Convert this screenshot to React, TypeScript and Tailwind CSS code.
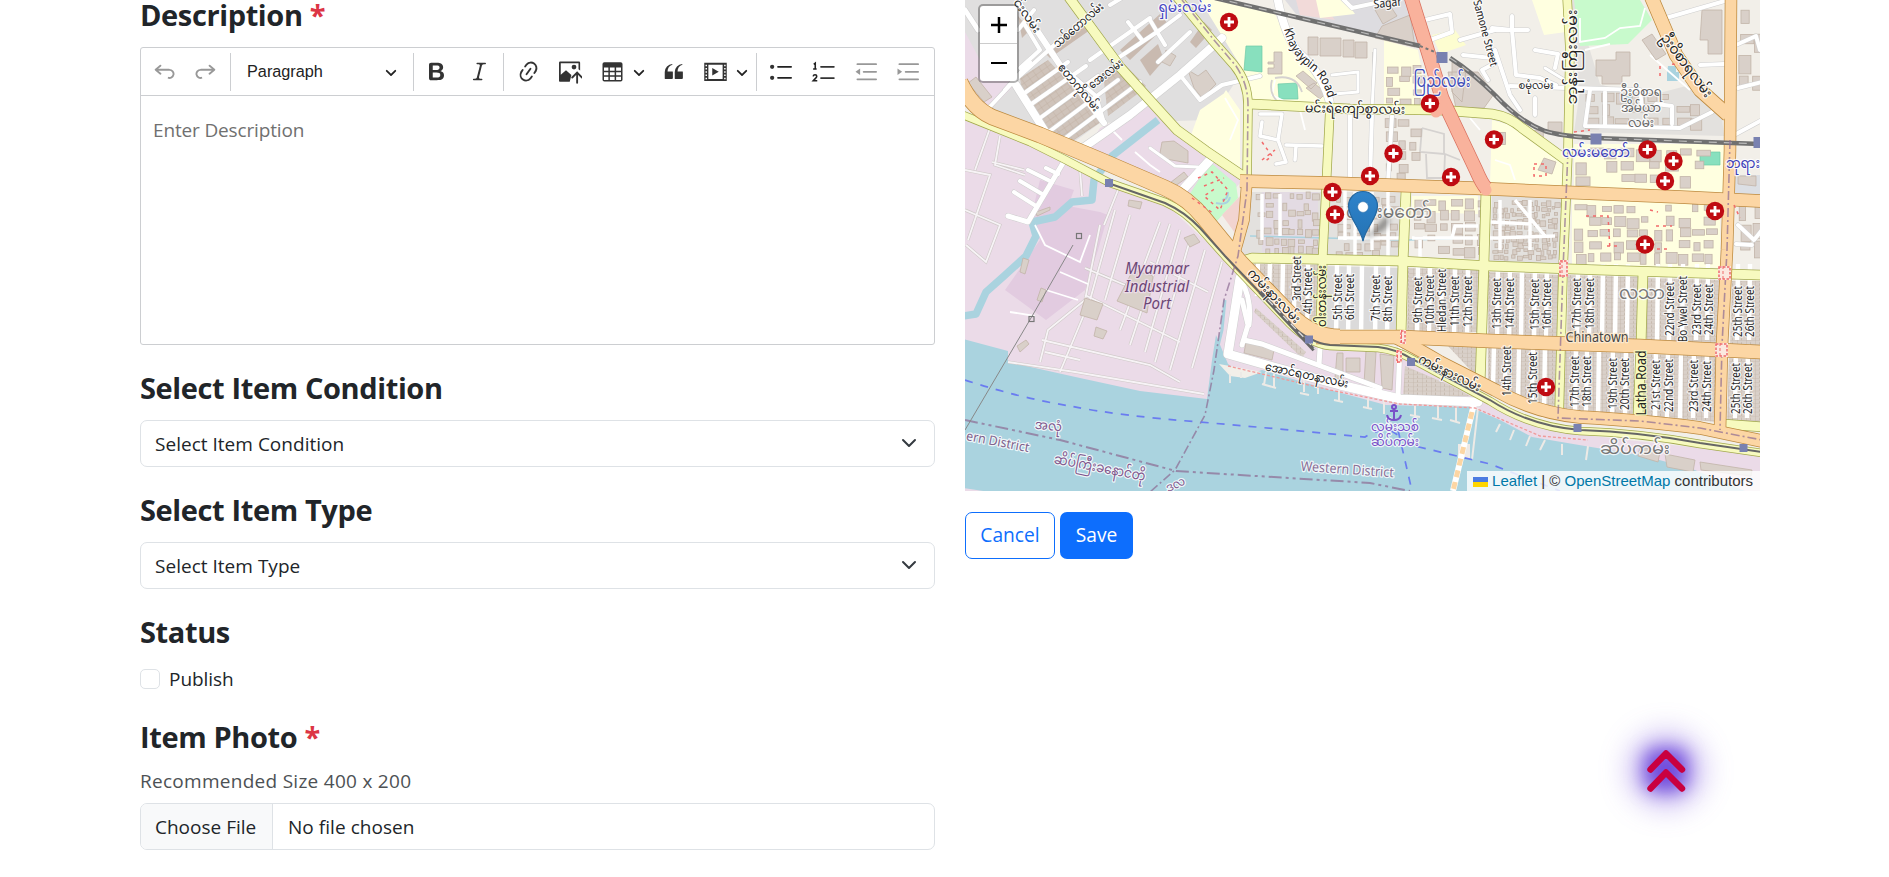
import type { ReactNode } from "react";

const UI = "font-['Open_Sans','Noto_Sans',sans-serif]";

/* ---------- small form pieces ---------- */

function Heading({ children, required }: { children: ReactNode; required?: boolean }) {
  return (
    <h3 className="h-[36px] whitespace-nowrap text-[29px] font-bold leading-[36px] tracking-[-0.38px] text-[#212529]">
      {children}
      {required && <span className="text-[#dc3545]"> *</span>}
    </h3>
  );
}

function SelectBox({ label }: { label: string }) {
  return (
    <button className="flex h-[47px] w-full items-center justify-between rounded-[7px] border border-[#dee2e6] bg-white pl-[14px] pr-[17px] text-left">
      <span className="pt-[2px] text-[19px] tracking-[0.02px] text-[#212529]">{label}</span>
      <svg width="16" height="16" viewBox="0 0 16 16" fill="none" stroke="#343a40" strokeWidth="2" strokeLinecap="round" strokeLinejoin="round" className="-mt-[2px]">
        <path d="m2 5 6 6 6-6" />
      </svg>
    </button>
  );
}

/* ---------- editor toolbar ---------- */

function Tool({ children, dim, className = "" }: { children: ReactNode; dim?: boolean; className?: string }) {
  return (
    <button className={`flex h-[40px] w-[41px] shrink-0 items-center justify-center ${className}`}>
      <svg width="25" height="25" viewBox="0 0 20 20" fill="#333" className={dim ? "opacity-50" : ""}>
        {children}
      </svg>
    </button>
  );
}

function Caret({ className = "" }: { className?: string }) {
  return (
    <svg width="12" height="12" viewBox="0 0 10 10" className={`shrink-0 ${className}`}>
      <path d="M.941 4.523a.75.75 0 1 1 1.06-1.06l3.006 3.005 3.005-3.005a.75.75 0 1 1 1.06 1.06l-3.549 3.55a.75.75 0 0 1-1.168-.136L.941 4.523z" fill="#222" />
    </svg>
  );
}

function Divider({ className = "" }: { className?: string }) {
  return <span className={`h-[38px] w-px shrink-0 bg-[#ccced1] ${className}`} />;
}

function Toolbar() {
  return (
    <div className="flex h-[48px] items-center border-b border-[#ccced1] pl-[3px]">
      <Tool dim>
        <path d="m5.042 9.367 2.189 1.837a.75.75 0 0 1-.965 1.149l-3.788-3.18a.747.747 0 0 1-.21-.284.75.75 0 0 1 .17-.945L6.23 4.762a.75.75 0 1 1 .964 1.15L4.863 7.866h8.917A.75.75 0 0 1 14 7.9a4 4 0 1 1-1.477 7.718l.344-1.489a2.5 2.5 0 1 0 1.094-4.73l.008-.032H5.042z" />
      </Tool>
      <Tool dim>
        <path d="m14.958 9.367-2.189 1.837a.75.75 0 0 0 .965 1.149l3.788-3.18a.747.747 0 0 0 .21-.284.75.75 0 0 0-.17-.945L13.77 4.762a.75.75 0 1 0-.964 1.15l2.331 1.955H6.22A.75.75 0 0 0 6 7.9a4 4 0 1 0 1.477 7.718l-.344-1.489A2.5 2.5 0 1 1 6.039 9.4l-.008-.032h8.927z" />
      </Tool>
      <Divider className="ml-[4px]" />
      <button className="flex h-[40px] w-[182px] shrink-0 items-center justify-between pl-[16px] pr-[16px]">
        <span className="-mt-[1px] font-['Liberation_Sans',Arial,sans-serif] text-[16.25px] text-[#222]">Paragraph</span>
        <Caret />
      </button>
      <Divider />
      <Tool className="ml-[2px]">
        <path d="M10.187 17H5.773c-.637 0-1.092-.138-1.364-.415-.273-.277-.409-.718-.409-1.323V4.738c0-.617.14-1.062.419-1.332.279-.27.73-.406 1.354-.406h4.68c.69 0 1.288.041 1.793.124.506.083.96.242 1.36.478.341.197.644.447.906.75a3.262 3.262 0 0 1 .808 2.162c0 1.401-.722 2.426-2.167 3.075C15.05 10.175 16 11.315 16 13.01a3.756 3.756 0 0 1-2.296 3.504 6.1 6.1 0 0 1-1.517.377c-.571.073-1.238.11-2 .11zm-.217-6.217H7v4.087h3.069c1.977 0 2.965-.69 2.965-2.072 0-.707-.256-1.22-.768-1.537-.512-.319-1.277-.478-2.296-.478zM7 5.13v3.619h2.606c.729 0 1.292-.067 1.69-.2a1.6 1.6 0 0 0 .91-.765c.165-.267.247-.566.247-.897 0-.707-.26-1.176-.778-1.409-.519-.232-1.31-.348-2.375-.348H7z" />
      </Tool>
      <Tool className="ml-[2px]">
        <path d="m9.586 14.633.021.004c-.036.335.095.655.393.962.082.083.173.15.274.201h1.474a.6.6 0 1 1 0 1.2H5.304a.6.6 0 0 1 0-1.2h1.15c.474-.07.809-.182 1.005-.334.157-.122.291-.32.404-.597l2.416-9.55a1.053 1.053 0 0 0-.281-.823 1.12 1.12 0 0 0-.442-.296H8.15a.6.6 0 0 1 0-1.2h6.443a.6.6 0 1 1 0 1.2h-1.195c-.376.056-.65.155-.823.296-.215.175-.423.439-.623.79l-2.366 9.347z" />
      </Tool>
      <Divider className="ml-[3px]" />
      <Tool className="ml-[4px]">
        <path d="m11.077 15 .991-1.416a.75.75 0 1 1 1.229.86l-1.148 1.64a.748.748 0 0 1-.217.206 5.251 5.251 0 0 1-8.503-5.955.741.741 0 0 1 .12-.274l1.147-1.639a.75.75 0 1 1 1.228.86L4.933 10.7l.006.003a3.75 3.75 0 0 0 6.132 4.294l.006.004zm5.494-5.335a.748.748 0 0 1-.12.274l-1.147 1.639a.75.75 0 1 1-1.228-.86l.86-1.23a3.75 3.75 0 0 0-6.144-4.301l-.86 1.229a.75.75 0 0 1-1.229-.86l1.148-1.64a.748.748 0 0 1 .217-.206 5.251 5.251 0 0 1 8.503 5.955zm-4.563-2.532a.75.75 0 0 1 .184 1.045l-3.155 4.505a.75.75 0 1 1-1.229-.86l3.155-4.506a.75.75 0 0 1 1.045-.184z" />
      </Tool>
      <Tool>
        <path d="M1.6 17.6V2.9q0-.9.9-.9h15.1q.9 0 .9.9v6.3l-1.3-1V3.4H3v9.200l4.200-3.700 4.300 3.800-1.300 5.500H2.300q-.7 0-.7-.6z" />
        <circle cx="13.6" cy="6.4" r="1.9" />
        <path d="m12.2 14.8 3.9-3.9 3.9 3.9M16.1 11.5V19" fill="none" stroke="#333" strokeWidth="1.5" strokeLinecap="round" />
      </Tool>
      <Tool className="ml-[2px]">
        <path fillRule="evenodd" d="M3.5 2.6h13Q18 2.6 18 4v12.6q0 1.4-1.5 1.4h-13Q2 18 2 16.600V4q0-1.400 1.500-1.400zM3.200 6.800v2.500h3.500v-2.500zm4.700 0v2.500h3.800v-2.500zm5 0v2.500h3.900v-2.500zM3.200 10.500v2.500h3.500v-2.500zm4.700 0v2.500h3.800v-2.500zm5 0v2.500h3.900v-2.500zM3.200 14.200v2.600h3.500v-2.600zm4.700 0v2.600h3.800v-2.600zm5 0v2.600h3.900v-2.600z" />
      </Tool>
      <Caret />
      <Tool className="ml-[8px]">
        <path d="M3 10.423a6.5 6.5 0 0 1 6.056-6.408l.038.67C6.448 5.423 5.354 7.663 5.22 10H9c.552 0 .5.432.5.986v4.511c0 .554-.448.503-1 .503h-5c-.552 0-.5-.449-.5-1.003v-4.574zm8 0a6.5 6.5 0 0 1 6.056-6.408l.038.67c-2.646.739-3.74 2.979-3.873 5.315H17c.552 0 .5.432.5.986v4.511c0 .554-.448.503-1 .503h-5c-.552 0-.5-.449-.5-1.003v-4.574z" />
      </Tool>
      <Tool className="ml-[1px]">
        <path fillRule="evenodd" d="M1 3h18v14.500H1zM4.300 4.600v11.300h11.400V4.600zM2 4.500v1.200h1.200V4.500zm0 2.600v1.200h1.200V7.100zm0 2.600v1.200h1.200V9.700zm0 2.600v1.200h1.200v-1.200zm0 2.600v1.200h1.200v-1.200zM16.900 4.500v1.200h1.200V4.500zm0 2.600v1.200h1.200V7.100zm0 2.600v1.200h1.200V9.700zm0 2.600v1.200h1.200v-1.200zm0 2.600v1.200h1.200v-1.200z" />
        <path d="M7.400 7.200v6l5.200-3z" />
      </Tool>
      <Caret />
      <Divider className="ml-[8px]" />
      <Tool className="ml-[3px]">
        <path d="M8 6.200h10.500M8 15h10.500" stroke="#222" strokeWidth="1.400" strokeLinecap="round" />
        <circle cx="3.300" cy="6.200" r="1.700" />
        <circle cx="3.300" cy="15" r="1.700" />
      </Tool>
      <Tool className="ml-[2px]">
        <path d="M8 6.200h10.300M8 15.200h10.300" stroke="#333" strokeWidth="1.400" strokeLinecap="round" />
        <path d="M2.200 4.300 3.400 3.300V8M1.700 8H4.500M1.700 13.900q.3-1.300 1.500-1.300 1.400 0 1.400 1.200 0 .8-1.200 1.900L1.800 17.400H5" fill="none" stroke="#222" strokeWidth="1.250" />
      </Tool>
      <Tool dim className="ml-[1px]">
        <path d="M3.500 4.200h15M8.500 10.200h10M3.500 16.200h15" stroke="#333" strokeWidth="1.400" strokeLinecap="round" />
        <path d="M5.700 7.600v5.200L2 10.200z" />
      </Tool>
      <Tool dim className="ml-[1px]">
        <path d="M3.500 4.200h15M8.500 10.200h10M3.500 16.200h15" stroke="#333" strokeWidth="1.400" strokeLinecap="round" />
        <path d="M2 7.600v5.200l3.700-2.600z" />
      </Tool>
    </div>
  );
}

/* ---------- map ---------- */

const TRUNK = "#f9b29c";
const PRIMARY = "#fcd6a4";
const SECONDARY = "#f7fabf";

type RoadSpec = { d: string; w: number; c: string };

const yellowRoads: RoadSpec[] = [
  { d: "M1068-4 1120 67 1147 97 1177 130 1206 151 1243 176", w: 9, c: SECONDARY },
  { d: "M1176-4 1212 40 1234 65Q1248 82 1248 105L1247 180", w: 8, c: SECONDARY },
  { d: "M1250 104 1350 109 1440 110 1492 114Q1510 117 1522 128L1566 160", w: 9, c: SECONDARY },
  { d: "M1236 263 1252 258 1400 261 1490 266 1600 270 1762 275", w: 9, c: SECONDARY },
  { d: "M1330 108 1326 190 1323 250 1320 335", w: 8, c: SECONDARY },
  { d: "M1406 190 1403 262 1401 335", w: 9, c: SECONDARY },
  { d: "M1486 190 1484 262 1480 385", w: 9, c: SECONDARY },
  { d: "M1567-4 1570 50 1568 150 1566 200 1563 270 1559 418", w: 8, c: SECONDARY },
  { d: "M1643 272 1641 345 1638 418", w: 9, c: SECONDARY },
  { d: "M1722 424 1762 427", w: 9, c: SECONDARY },
  { d: "M963 115 1030 142 1062 158 1110 183 1165 202Q1185 211 1200 228L1225 256 1290 324Q1310 344 1330 346L1378 348Q1396 350 1412 359L1490 401Q1530 427 1580 431 1640 433 1700 444L1762 453", w: 7, c: SECONDARY },
];

const orangeRoads: RoadSpec[] = [
  { d: "M1240 181 1330 183 1470 188 1560 192 1680 197 1762 201", w: 12, c: PRIMARY },
  { d: "M1247 181 1244 220 1234 256", w: 10, c: PRIMARY },
  { d: "M1650-6 1676 55 1700 90 1728 115", w: 13, c: PRIMARY },
  { d: "M1731-4 1730 150 1727 250 1722 345 1720 430", w: 11, c: PRIMARY },
  { d: "M1395 337Q1420 350 1440 362L1495 390Q1535 413 1580 417 1650 421 1700 428L1762 441", w: 12, c: PRIMARY },
  { d: "M1316 337 1400 337 1490 341 1640 346 1762 352", w: 13, c: PRIMARY },
  { d: "M960 82Q972 108 992 117L1040 135 1100 160 1165 188Q1188 198 1204 218L1240 262 1290 314Q1312 337 1340 337", w: 15, c: PRIMARY },
];

const minorRoads: [string, number][] = [
  ["M965 10 978 30", 5], ["M985 112 1015 80 1060 40 1098 8", 4], ["M1016 85 1058 152", 8], ["M1030 62 1005 90", 4],
  ["M1020 5 1060 65 1104 123", 6], ["M1080 150 1130 115 1180 75 1222 38", 8], ["M1026 92 1068 62", 4], ["M1030 105 1086 66", 4],
  ["M1040 118 1098 76", 4], ["M1050 131 1118 80", 4], ["M1060 142 1140 82", 4], ["M1060 65 1096 96 1104 123", 4],
  ["M1090 60 1150 18M1115 60 1160 30 1180 15", 4], ["M1128 22 1142 40M1150 20 1165 45M1158 62 1190 32M1110 5 1125-4", 4],
  ["M1025 25 1040 50 1020 68M1034 10 1018 30", 4], ["M1180 75 1200 100 1222 85 1260 76", 4],
  ["M1277-4Q1284 34 1298 52 1325 75 1331 108", 8], ["M1178 195 1210 160", 9],
  ["M1063 163 1028 222 1008 216", 5], ["M1028 170 1052 182M1020 181 1042 194M1014 192 1036 206M1046 168 1058 174", 4],
  ["M1150 148 1175 166 1198 167", 3], ["M1340-4 1352 8 1380 2", 4],
  ["M1350 111 1350 182M1372 113 1370 182M1392 116 1388 182", 4], ["M1332 75 1358 72 1358 92 1334 94M1375 50 1372 110", 3],
  ["M1260 114 1282 114 1278 140 1260 136 1262 122M1278 140 1286 162 1276 164M1286 145 1322 146M1296 146 1295 160", 3.5],
  ["M1425 20 1450 14 1452 32 1430 40M1460 40 1495 30M1463 55 1492 58M1488 80 1482 70 1497 62", 4],
  ["M1492 28 1512 30 1516 75 1540 78 1556 85M1512 30 1512 16M1492 30 1528 30M1535 50 1558 54 1555 68", 4],
  ["M1495 50 1510 95 1520 110M1510 86 1566 88M1535 98 1535 115", 4], ["M1575 88 1640 90 1642 108M1590 90 1585 126 1680 128 1712 112M1605 92 1605 124M1656 104 1672 106 1672 124", 4],
  ["M1666 18 1728 0M1700 65 1724 64M1736 45 1756 36 1760 50M1738 88 1762 82M1736 134 1762 120", 4],
  ["M1545 68 1568 82M1568 150 1570 118", 3],
  ["M1240 278 1228 354 1270 366 1340 385 1400 399 1478 402", 9], ["M1242 300 1248 325 1242 345M1244 340 1262 344 1310 362 1380 388", 5],
  ["M1320 348 1319 365M1400 345 1398 396M1242 282Q1252 300 1249 325", 5],
  ["M1738 225 1754 240 1762 230M1736 244 1752 245", 4],
];

const portLanes =
  "M1100 225 1085 300 1048 330 1040 362M1115 210 1090 300 1060 372M1008 362 1075 372 1204 394M1042 340 1150 365 1180 382M1130 215 1105 300M1160 222 1120 330M1170 224 1130 345M1180 230 1145 352M1190 240 1155 362M1205 250 1170 370M1222 262 1200 340 1192 368M1085 295 1180 342M1045 352 1080 360M1085 268 1125 285M1150 262 1208 292M965 210 1000 225 986 262 966 245M990 128 975 170M1000 136 995 165 1025 175M965 170 990 175 968 240M1080 170 1082 196M1118 190 1104 225M1024 170 992 162";

const upperStreets = [1258, 1270, 1283, 1295, 1308, 1337, 1349, 1362, 1376, 1388, 1418, 1430, 1442, 1455, 1468, 1498, 1510, 1522, 1535, 1547, 1578, 1590, 1603, 1616, 1628, 1658, 1670, 1683, 1697, 1708, 1738, 1750];
const lowerStreets = [1494, 1506, 1519, 1533, 1545, 1576, 1587, 1599, 1613, 1626, 1656, 1668, 1681, 1694, 1707, 1736, 1748];

function seeded(seed: number) {
  let s = seed;
  return () => {
    s = (s * 16807) % 2147483647;
    return s / 2147483647;
  };
}

type Rect = { x: number; y: number; w: number; h: number };

function scatter(x0: number, y0: number, x1: number, y1: number, stepX: number, stepY: number, fill: number, seed: number): Rect[] {
  const rnd = seeded(seed);
  const out: Rect[] = [];
  for (let y = y0; y < y1; y += stepY) {
    for (let x = x0; x < x1; x += stepX) {
      if (rnd() < fill) {
        const w = stepX * (0.4 + rnd() * 0.55);
        const h = stepY * (0.4 + rnd() * 0.55);
        out.push({ x: x + rnd() * 3, y: y + rnd() * 3, w, h });
      }
    }
  }
  return out;
}

const buildings: Rect[] = [
  ...scatter(1256, 192, 1316, 252, 8, 9, 0.75, 11),
  ...scatter(1335, 196, 1398, 252, 9, 9, 0.8, 23),
  ...scatter(1412, 198, 1478, 252, 13, 12, 0.75, 37),
  ...scatter(1492, 200, 1558, 256, 6, 6, 0.92, 41),
  ...scatter(1574, 204, 1712, 260, 13, 12, 0.85, 53),
  ...scatter(1574, 148, 1700, 182, 15, 13, 0.75, 61),
  ...scatter(1492, 130, 1550, 178, 20, 16, 0.45, 71),
  ...scatter(1385, 118, 1412, 178, 12, 11, 0.7, 83),
  ...scatter(1386, 65, 1420, 100, 13, 11, 0.75, 97),
  ...scatter(1585, 92, 1700, 126, 15, 12, 0.75, 101),
  ...scatter(1739, 205, 1758, 255, 14, 18, 0.7, 107),
  ...scatter(1738, 10, 1758, 80, 14, 22, 0.7, 109),
];

const solidBuildings =
  "M1308 37h10v18h-10zM1320 38h21v18h-21zM1343 40h11v17h-11zM1355 42h12v16h-12zM1268 62h6v-10h8v22h-14v-6h6v-4h-6zM1296 76l7-5 14 12-6 6zM1306 88l8-5 12 10-6 6z" +
  "M1375 10l14-6 8 12-14 8zM1382 26l28-11 5 32-40-9zM1452 62l14 8-4 32-10-10zM1448 72h30l16 22-10 14h-28zM1596 60h20v-8h14v24h-8v8h-20v-8h-6zM1642 40l10-6 14 20-10 6zM1702 10h20v44h-14v-14h-8z" +
  "M1162 142l12-1 14 10v12l-22-4-6-6zM1166 186l18-14 4 5-20 14zM968 83l8-6 16 20-8 5zM1133 270l20 6-6 37-30-12zM1085 298l18 6-6 16-17-5zM1096 327l11 4-4 8-9-3z" +
  "M1023 258l6 2-4 14-5-2zM1041 288l5 2-4 12-5-2zM1017 346l9-6 3 4-9 8zM1036 212l14-5 0 3-13 6zM1129 200l13 2-2 7-12-3zM1184 238l10-4 6 8-10 5z" +
  "M1188 70l10 6 8-6 10 14-14 14-8-10zM1166 50l10 6-6 10-8-4zM1246 342l28 8-2 10-28-7zM1337 353l6 0 0 28-8-3zM1346 358l14 0 0 14-14 0zM1366 350l10 2-2 36-10-4zM1380 354l14 2-2 34-10-2z" +
  "M1548 122h14v10h-14zM1544 158l12 4-4 12-14-4zM1738 176h18v10l-18-2zM1640 446l20 6-2 10-20-6zM1665 454l30 6-2 12-26-5zM1700 462l52 8-1 6-50-6z";

const hospitals: [number, number][] = [
  [1229, 22], [1430, 103.5], [1494, 139.5], [1393.5, 153.5], [1370, 176], [1451, 177], [1332.5, 192], [1335, 214.5],
  [1647.5, 149.5], [1673.5, 161], [1665, 181], [1715, 211], [1645, 244.5], [1546, 387],
];

const stations: [number, number, number][] = [
  [1109, 183, 8], [1442, 57.5, 11], [1596, 139, 11], [1759, 142.5, 11], [1309, 339.5, 8], [1411, 362, 8], [1577.5, 428, 8], [1743.5, 448, 8],
];

type LabelSpec = { t: string; x: number; y: number; r?: number; len?: number; s?: number; c?: string; halo?: string; i?: boolean };

const labels: LabelSpec[] = [
  { t: "ရှမ်းလမ်း", x: 1185, y: 12, len: 53, s: 15, c: "#4444c4" },
  { t: "င်းလမ်း", x: 1024, y: 18, r: 55, len: 38, s: 12 },
  { t: "သစ်တောလမ်း", x: 1081, y: 28, r: -41, len: 62, s: 12 },
  { t: "ဧတာကိုလမ်း", x: 1076, y: 90, r: 50, len: 58, s: 12 },
  { t: "အေးလမ်း", x: 1108, y: 77, r: -38, len: 40, s: 12 },
  { t: "Sagar", x: 1388, y: 7, r: -6, len: 28, s: 12 },
  { t: "Samone Street", x: 1482, y: 34, r: 75, len: 68, s: 11 },
  { t: "ပြည်လမ်း", x: 1442, y: 87, len: 57, s: 18, c: "#3b4ab8" },
  { t: "မင်းရဲကျော်စွာလမ်း", x: 1355, y: 113, r: 1, len: 100, s: 13 },
  { t: "လမ်းမတော်", x: 1389, y: 218, len: 86, s: 18, c: "#777" },
  { t: "စမုံလမ်း", x: 1536, y: 89, len: 35, s: 11 },
  { t: "ဘုန်းကြီးလမ်း", x: 1577, y: 57, r: -90, len: 95, s: 14 },
  { t: "ဦးဝိစာရလမ်း", x: 1683, y: 68, r: 53, len: 76, s: 14 },
  { t: "ဦးဝိစာရ", x: 1641, y: 96, len: 42, s: 12, c: "#666" },
  { t: "အိမ်ယာ", x: 1641, y: 112, len: 40, s: 12, c: "#666" },
  { t: "လမ်း", x: 1641, y: 127, len: 26, s: 12, c: "#666" },
  { t: "လမ်းမတော်", x: 1596, y: 157, len: 68, s: 15, c: "#3b3fb8" },
  { t: "ဘုရား", x: 1743, y: 168, len: 34, s: 14, c: "#3b3fb8" },
  { t: "Myanmar", x: 1157, y: 274, len: 64, s: 15.5, c: "#6c4675", halo: "#ebdbe8", i: true },
  { t: "Industrial", x: 1157, y: 292, len: 64, s: 15.5, c: "#6c4675", halo: "#ebdbe8", i: true },
  { t: "Port", x: 1157, y: 309, len: 28, s: 15.5, c: "#6c4675", halo: "#ebdbe8", i: true },
  { t: "အလုံ", x: 1048, y: 430, r: 5, len: 27, s: 13, c: "#80558c" },
  { t: "ern District", x: 997, y: 446, r: 11, len: 64, s: 13, c: "#80628c" },
  { t: "ဆိပ်ကြီးခနောင်တို", x: 1099, y: 472, r: 11, len: 93, s: 14, c: "#80558c" },
  { t: "ဒလ", x: 1177, y: 488, r: -25, len: 20, s: 12, c: "#80558c" },
  { t: "Western District", x: 1347, y: 474, r: 4, len: 93, s: 13.5, c: "#8a6f96" },
  { t: "ကမ်းနားလမ်း", x: 1271, y: 299, r: 46, len: 70, s: 13 },
  { t: "ကမ်းနားလမ်း", x: 1448, y: 377, r: 26, len: 68, s: 13 },
  { t: "ဝါးတန်းလမ်း", x: 1326, y: 296, r: -90, len: 62, s: 12, halo: SECONDARY },
  { t: "အောင်ရတနာလမ်း", x: 1306, y: 379, r: 12, len: 85, s: 12 },
  { t: "လမ်းသစ်", x: 1395, y: 431, len: 48, s: 13, c: "#7950c8" },
  { t: "ဆိပ်ကမ်း", x: 1395, y: 446, len: 48, s: 13, c: "#7950c8" },
  { t: "လသာ", x: 1642, y: 299, len: 46, s: 18, c: "#777" },
  { t: "Chinatown", x: 1597, y: 341.5, len: 63, s: 13.5, c: "#444", halo: "#fbe9d0" },
  { t: "ဆိပ်ကမ်း", x: 1635, y: 454, len: 70, s: 17, c: "#777" },
  { t: "Latha Road", x: 1645.5, y: 383, r: -90, len: 65, s: 13.5, halo: SECONDARY },
];

/* name, centre x, top y, bottom y */
const streetNames: [string, number, number, number][] = [
  ["3rd Street", 1297, 256, 301], ["4th Street", 1308, 268, 314], ["5th Street", 1338, 274, 320], ["6th Street", 1350, 274, 320],
  ["7th Street", 1376, 275, 321], ["8th Street", 1388, 276, 322], ["9th Street", 1418, 277, 323], ["10th Street", 1430, 275, 325],
  ["Hledan Street", 1442, 269, 332], ["11th Street", 1455, 276, 326], ["12th Street", 1468, 276, 327], ["13th Street", 1497, 278, 329],
  ["14th Street", 1510, 278, 329], ["15th Street", 1535, 279, 330], ["16th Street", 1547, 279, 330], ["17th Street", 1577, 278, 329],
  ["18th Street", 1590, 278, 329], ["22nd Street", 1670, 282, 336], ["Bo Ywel Street", 1683, 276, 342], ["23rd Street", 1697, 284, 335],
  ["24th Street", 1709, 284, 335], ["25th Street", 1738, 286, 337], ["26th Street", 1750, 286, 337], ["14th Street", 1507, 346, 396],
  ["15th Street", 1533, 352, 404], ["17th Street", 1575, 356, 407], ["18th Street", 1587, 356, 407], ["19th Street", 1613, 358, 409],
  ["20th Street", 1625, 358, 410], ["21st Street", 1656, 360, 410], ["22nd Street", 1669, 359, 412], ["23rd Street", 1694, 360, 412],
  ["24th Street", 1707, 361, 412], ["25th Street", 1736, 363, 414], ["26th Street", 1748, 363, 414],
];

function MapLabel({ t, x, y, r = 0, len, s = 13, c = "#222", halo = "#ffffffcc", i }: LabelSpec) {
  return (
    <text
      x={x}
      y={y}
      textAnchor="middle"
      textLength={len}
      lengthAdjust="spacingAndGlyphs"
      fontSize={s}
      fill={c}
      stroke={halo}
      strokeWidth="2.5"
      strokeLinejoin="round"
      paintOrder="stroke"
      fontStyle={i ? "italic" : undefined}
      transform={r ? `rotate(${r} ${x} ${y})` : undefined}
    >
      {t}
    </text>
  );
}

function Roads({ roads, casing }: { roads: RoadSpec[]; casing: string }) {
  return (
    <g fill="none" strokeLinejoin="round">
      {roads.map((r) => <path key={`c${r.d}`} d={r.d} stroke={casing} strokeWidth={r.w + 1.5} />)}
      {roads.map((r) => <path key={r.d} d={r.d} stroke={r.c} strokeWidth={r.w} />)}
    </g>
  );
}

function Crossing({ x, y, w, h }: Rect) {
  return (
    <g>
      <rect x={x} y={y} width={w} height={h} fill="#fbe8e0" />
      <rect x={x + 1} y={y + 1} width={w - 2} height={h - 2} fill="none" stroke="#f06a6a" strokeWidth="1.5" strokeDasharray="2.5 1.5" />
      <path d={`M${x + w / 2 - 1.5} ${y}v${h}`} stroke="#f06a6a" strokeDasharray="3 2" />
    </g>
  );
}

function CityMap() {
  return (
    <svg width="795" height="491" viewBox="965 0 795 491" className="block font-['Noto_Sans','Noto_Sans_Myanmar','Padauk',sans-serif]">
      <defs>
        <pattern id="rows" width="9" height="4.2" patternUnits="userSpaceOnUse">
          <rect width="9" height="4.2" fill="#d9d0c9" />
          <path d="M0 0H9M0 0V4.2M4.5 2V4.2" stroke="#c2b4a8" strokeWidth="0.7" />
        </pattern>
        <pattern id="rowsTilted" width="7" height="5" patternUnits="userSpaceOnUse" patternTransform="rotate(-35)">
          <rect width="7" height="5" fill="#cfc3ba" />
          <path d="M0 0H7M0 0V5" stroke="#bbaa9e" strokeWidth="0.7" />
        </pattern>
        <path id="khayaypin" d="M1284 29Q1288 50 1306 66 1322 76 1328 98" />
        <linearGradient id="pin" x1="0" y1="0" x2="0" y2="1">
          <stop offset="0" stopColor="#2e83cb" />
          <stop offset="1" stopColor="#2573b4" />
        </linearGradient>
        <filter id="soft" x="-50%" y="-50%" width="200%" height="200%">
          <feGaussianBlur stdDeviation="2.5" />
        </filter>
      </defs>

      {/* land use */}
      <rect x="965" width="795" height="491" fill="#f2efe9" />
      <path d="M965 0H1200L1250 60 1210 120 1100 123 1060 152 985 112 965 80z" fill="#e0dfdf" />
      <path d="M965 32 980 60 1016 84 990 110 965 85zM1100 128 1147 106 1200 150 1243 180 1210 215 1080 160z" fill="#ebdbe8" />
      <path d="M1330 0H1412L1420 46 1340 28 1296 14 1285 0z" fill="#dddce0" />
      <path d="M1296 0H1320L1335 20 1300 15z" fill="#f2dad9" />
      <path d="M1200 0H1225L1275 14 1292 50 1324 78 1328 104 1250 102 1243 70z" fill="#ffffe0" />
      <path d="M1316 0H1345L1355 14 1320 18zM1384 40 1418 50 1428 105 1384 104zM1492 120 1520 128 1562 164 1562 186 1490 184zM1574 144H1724V194L1574 188zM1572 196 1720 202V268L1572 264zM1412 196H1478V214L1412 212zM1226 90 1240 110 1240 168 1195 140zM1200 110 1226 92 1238 110 1235 165 1190 138zM1532 0H1566V32L1544 35z" fill="#ffffe0" />
      <path d="M1432 35 1455 30 1466 45 1440 54z" fill="#fdfdd0" />
      <path d="M1252 192H1330V262H1240zM1330 192H1400V258H1330zM1492 196H1562V264H1490zM1575 0H1572V40L1580 90 1574 132 1724 136 1722 118 1690 85 1640 98 1600 84z" fill="#e3e1de" />
      <path d="M1262 192H1318V252H1262z" fill="#e3dbe3" />
      <path d="M1574 0H1640L1652 20 1628 44 1580 46z" fill="#c8facc" />
      <path d="M1210 162 1236 184 1238 198 1216 222 1186 200z" fill="#c8facc" />
      <path d="M1222 215 1240 196V240z" fill="#f2d4d0" />
      <path d="M1010 152 1060 168 1058 180 1028 222 1008 215 1025 170z" fill="#dcdbdb" />
      <path d="M1735 175H1760V200H1735z" fill="#dcdfe4" />
      <path d="M963 120 1030 145 1110 186 1170 208 1222 256 1290 324 1312 346 1400 352 1490 402 1575 434 1762 455V491H965z" fill="#ebdbe8" />
      <path d="M1040 180 1074 190 1068 206 1100 212 1108 215 1098 250 1085 290 1046 320 1005 290 1040 240 1030 222z" fill="#e2cbe0" />

      {/* river */}
      <path d="M963 339 1008 351 1008 362 1080 378 1140 391 1207 399 1212 360 1216 335 1228 364 1245 376 1262 370 1330 390 1386 405 1470 407 1500 420 1532 437 1585 446 1640 455 1690 468 1745 491H963z" fill="#aad3df" />
      <path d="M1219 364 1262 372 1245 378 1230 376z" fill="#f2efe9" />
      <path d="M963 488 990 492H963z" fill="#ebdbe8" />
      <path d="M1158 120 1112 156 1094 180 1092 200 1072 202 1055 217 1032 222 1036 236 1026 256 1004 276 986 292 976 314 963 316" fill="none" stroke="#aad3df" strokeWidth="7.5" strokeLinejoin="round" />
      <path d="M1225 300 1222 330 1215 358" fill="none" stroke="#aad3df" strokeWidth="3" />
      <path d="M1250 236 1400 240M1408 240 1480 238 1490 236" stroke="#aad3df" strokeWidth="1.5" fill="none" />
      <path d="M1668 66h8v6h3v9h-12v-8zM1625 96h10v8h-12z" fill="#aad3df" />
      <path d="M1222 200q6 0 6-8 M1216 203q12 3 14-6" fill="none" stroke="#aad3df" strokeWidth="2" />

      {/* pitches */}
      <path d="M1246 46 1262 46 1262 72 1244 70zM1278 84 1297 83 1298 99 1279 99zM1700 152H1720V165H1700z" fill="#88e0be" stroke="#6fc9a6" strokeWidth="0.7" />

      {/* service roads */}
      <path d={portLanes} fill="none" stroke="#cfcac8" strokeWidth="3" />
      <path d={portLanes} fill="none" stroke="#f7f3f6" strokeWidth="1.8" />
      <g fill="none" stroke="#fff" strokeWidth="1.8">
        <path d="M1035 225 1045 245 1080 262 1090 235M1060 272 1088 284M1046 290 1078 300M1010 312 1035 316M1135 152 1150 165 1160 172M1110 128 1122 140M1580 18V42L1605 38 1620 28 1640 26 1645 8M1495 160 1510 165 1515 180M1650 55 1690 90M1660 24 1680 62" />
        <path d="M1585 50 1610 44M1470 118 1480 130M1225 98 1238 120 1230 140M1275 80 1272 95 1290 104M1300 110 1305 130" />
      </g>
      <path d="M1422 128 1420 152 1444 154V134L1422 128M1426 154 1427 178H1444L1445 154 1460 160M1373 52V100M1272 80Q1268 94 1280 104M1275 78Q1296 74 1302 92" fill="none" stroke="#d5d2d0" strokeWidth="1.8" />

      {/* buildings */}
      <path d="M1020 78 1048 60 1062 75 1104 120 1062 148 1022 92zM1104 82 1120 60 1146 86 1140 92 1108 116z" fill="url(#rowsTilted)" />
      <path d="M1044 52 1086 22 1090 30 1050 58zM1120 50 1160 14 1168 24 1130 60zM1190 42 1204 22 1212 30 1196 48zM1140 60 1158 44 1164 60 1150 76zM1018 16 1030 30 1022 38z" fill="#c9bab0" />
      <g fill="#d9d0c9" stroke="#c2b4a8" strokeWidth="0.8">
        <path d={solidBuildings} />
        {buildings.map((b) => <rect key={`${b.x}-${b.y}`} x={b.x} y={b.y} width={b.w} height={b.h} />)}
      </g>

      {/* dense street blocks */}
      <path d="M1252 264 1318 265 1316 328 1296 316z" fill="url(#rows)" />
      <path d="M1327 266 1398 268V329H1326z" fill="#dbdada" />
      <path d="M1408 268 1480 270V332H1407zM1488 272 1558 275V336H1488zM1568 275 1638 277V340H1567zM1647 278 1720 280V343H1645zM1732 281H1760V346H1730zM1488 348 1556 350V411L1520 402 1488 384zM1565 351 1634 353V414L1563 411zM1644 354 1716 356V422L1642 415zM1729 358 1760 359V422H1727zM1448 346 1476 347V376zM1405 366 1452 386 1470 396 1403 396zM1256 308 1306 352 1302 358 1254 312z" fill="url(#rows)" />
      <g stroke="#fff" strokeWidth="4.4">
        {upperStreets.map((x) => <path key={x} d={`M${x} ${x < 1320 ? 262 : 264}L${x - 1} ${x < 1275 ? 296 : x < 1300 ? 316 : 340}`} />)}
        {lowerStreets.map((x) => <path key={x} d={`M${x} 344L${x - 1} ${x < 1510 ? 388 : x < 1540 ? 402 : 418}`} />)}
        <path d="M1262 194V240M1280 194V236M1345 190V240M1355 192V256M1372 192V250M1388 192V256M1338 238H1400M1412 238H1478M1452 238 1455 226H1478M1500 200V250M1515 200 1545 236M1490 222 1530 224M1530 200V250M1490 238 1555 236M1420 262V240" strokeWidth="3.5" fill="none" />
      </g>

      {/* minor roads */}
      <g fill="none" strokeLinejoin="round" strokeLinecap="round">
        {minorRoads.map(([d, w]) => <path key={`c${d}`} d={d} stroke="#cfcfcf" strokeWidth={w + 1} />)}
        {minorRoads.map(([d, w]) => <path key={d} d={d} stroke="#fff" strokeWidth={w} />)}
      </g>

      {/* jetties */}
      <path d="M1230 374V383M1241 372V378M1262 384 1276 388M1266 372 1264 385M1274 374 1274 387M1304 380V392M1300 393 1309 395M1318 384V394M1339 390V401M1334 400 1343 402M1368 398V408M1363 407 1372 409M1384 400V414M1415 404V416M1410 415 1420 417M1438 406V418M1432 418 1442 420M1456 406V421M1450 420 1460 423M1500 424 1496 432M1514 430 1510 440M1530 436 1526 446M1545 440 1540 450M1562 444V455M1588 446 1586 460M1478 408 1472 460" stroke="#edeae6" strokeWidth="2" fill="none" />
      <path d="M1458 444h12v14h-12z" fill="#eeeae6" />
      <path d="M1474 404 1453 491" stroke="#fff" strokeWidth="6" />
      <path d="M1472 412 1453 491" stroke={PRIMARY} strokeWidth="5" strokeDasharray="7 5" />

      {/* main roads */}
      <Roads roads={yellowRoads} casing="#a3a94e" />
      <Roads roads={orangeRoads} casing="#bd8a3f" />
      <Roads roads={[{ d: "M1410-6 1429 55 1442 98 1476 170Q1482 184 1486 188", w: 13, c: TRUNK }]} casing="#d9705e" />
      <path d="M1480 178 1486 190M1436 112 1442 106" stroke={TRUNK} strokeWidth="11" strokeLinecap="round" />

      {/* railways */}
      <g fill="none">
        <path d="M1108 183 1165 203Q1185 212 1200 228L1225 256 1290 324Q1310 343 1330 345L1378 347Q1396 349 1412 359L1490 400Q1530 426 1580 430 1640 432 1700 443L1762 452" stroke="#666" strokeWidth="2" />
        <path d="M1215-2 1300 18 1420 46M1450 58Q1472 72 1495 95 1520 122 1545 131 1560 136 1595 138L1762 144" stroke="#707070" strokeWidth="4.5" />
        <path d="M1215-2 1300 18 1420 46M1450 58Q1472 72 1495 95 1520 122 1545 131 1560 136 1595 138L1762 144" stroke="#bbb" strokeWidth="1.2" strokeDasharray="8 7" />
        <path d="M1420 46 1445 56" stroke="#777" strokeWidth="2" strokeDasharray="3 3" />
        <path d="M1260 292 1314 350" stroke="#666" strokeWidth="4" />
        <path d="M1268 300 1316 350" stroke="#ddd" strokeWidth="1.3" strokeDasharray="7 4" />
      </g>

      {/* boundaries */}
      <g fill="none" stroke="#8d6b93" strokeWidth="1.6" opacity="0.7">
        <path d="M1182 0 1214 40 1236 66Q1248 84 1248 105L1247 190 1238 256 1224 300 1214 370 1205 415 1175 470 1150 492" strokeDasharray="9 3 2 3" />
        <path d="M965 420 1060 440 1176 471 1240 475 1370 483 1410 491" strokeWidth="2" strokeDasharray="13 4 3 4 3 4" />
        <path d="M1568 150 1563 270 1558 418 1640 421 1700 428 1762 440M1730 140 1727 250 1722 345 1720 430" strokeDasharray="9 3 2 3" />
      </g>
      <path d="M1073 245 1031 318 965 430" stroke="#888" strokeWidth="1" fill="none" />
      <path d="M965 380Q1020 398 1070 406 1120 416 1200 422L1290 430 1365 437Q1375 430 1390 430L1415 446 1490 464 1560 491M1398 430 1412 491" fill="none" stroke="#6a7cf0" strokeWidth="1.7" strokeDasharray="8 8" />
      <path d="M1228 366 1330 390 1400 404 1475 408 1540 436 1588 440" fill="none" stroke="#f09a9a" strokeWidth="1.3" strokeDasharray="3 2" />
      <path d="M1198 178 1212 172 1228 190 1220 210 1204 196 1216 188M1204 186 1224 178M1192 198 1214 214M1262 142 1272 156 1264 162M1262 160 1275 150M1660 66v14M1672 64 1686 66M1534 164H1546V176H1534zM1574 132 1590 130M1586 216 1608 216 1610 250M1650 210 1658 212M1656 226H1672M1734 205 1740 218M1607 246H1618M1636 249H1670" fill="none" stroke="#f26a6a" strokeWidth="1.5" strokeDasharray="3 4" />

      <Crossing x={1559} y={260} w={9} h={17} />
      <Crossing x={1718} y={266} w={13} h={14} />
      <Crossing x={1715} y={343} w={13} h={14} />
      <Crossing x={1400} y={330} w={6} h={14} />
      <Crossing x={1396} y={350} w={6} h={13} />

      <g fill="none" stroke="#777" strokeWidth="1.2">
        <rect x="1076.5" y="233.5" width="5" height="5" />
        <rect x="1029" y="316.5" width="5" height="5" />
      </g>

      {stations.map(([x, y, s]) => <rect key={`${x}${y}`} x={x - s / 2} y={y - s / 2} width={s} height={s} fill="#7981b0" />)}

      {/* labels */}
      {labels.map((l) => <MapLabel key={`${l.t}${l.x}`} {...l} />)}
      {streetNames.map(([t, x, top, bottom]) => (
        <MapLabel key={`${t}${x}`} t={t} x={x + 4} y={(top + bottom) / 2} r={-90} len={bottom - top} s={12} c="#2a2a2a" />
      ))}
      <text fontSize="12.5" fill="#222" stroke="#ffffffcc" strokeWidth="2.5" paintOrder="stroke">
        <textPath href="#khayaypin" textLength="84" lengthAdjust="spacingAndGlyphs">Khayaypin Road</textPath>
      </text>

      <g fill="none" stroke="#7950c8" strokeWidth="2">
        <circle cx="1394" cy="407" r="2" />
        <path d="M1394 409V420M1390 411H1398M1387 415Q1388 420 1394 420 1400 420 1401 415" />
      </g>

      {hospitals.map(([x, y]) => (
        <g key={`${x}${y}`}>
          <circle cx={x} cy={y} r="9.2" fill="#bf0b12" />
          <path d={`M${x - 5} ${y}h10M${x} ${y - 5}v10`} stroke="#fff" strokeWidth="2.8" />
        </g>
      ))}

      {/* pin */}
      <path d="M1364 240 1386 216Q1394 220 1384 230z" fill="#000" opacity="0.35" filter="url(#soft)" />
      <path d="M1363 241C1360 227 1348.5 218 1348.5 206A14.5 14.5 0 0 1 1377.5 206C1377.5 218 1366 227 1363 241z" fill="url(#pin)" stroke="#23669f" strokeWidth="1.2" />
      <circle cx="1363" cy="207" r="5.400" fill="#fff" stroke="#2a6da8" strokeWidth="0.6" />
    </svg>
  );
}

function MapPanel() {
  return (
    <div className="relative h-[491px] w-full overflow-hidden">
      <CityMap />
      <div className="absolute left-[13px] top-[4px] flex w-[41px] flex-col overflow-hidden rounded-[5px] border-2 border-black/30 bg-white bg-clip-padding">
        <button className="flex h-[38px] items-center justify-center border-b border-[#ccc]">
          <svg width="16" height="16" viewBox="0 0 16 16" stroke="#000" strokeWidth="2.5"><path d="M0 8H16M8 0V16" /></svg>
        </button>
        <button className="flex h-[37px] items-center justify-center">
          <svg width="16" height="16" viewBox="0 0 16 16" stroke="#000" strokeWidth="2"><path d="M0 8H16" /></svg>
        </button>
      </div>
      <div className="absolute bottom-0 right-0 flex h-[20px] items-center whitespace-pre bg-white/80 pl-[6px] pr-[7px] pt-[1px] font-['Liberation_Sans',Arial,sans-serif] text-[15px] text-[#333]">
        <svg width="15" height="10" viewBox="0 0 15 10" className="mr-[4px]">
          <path fill="#4c7be1" d="M0 0h15v5H0z" />
          <path fill="#ffd500" d="M0 5h15v5H0z" />
        </svg>
        <span className="text-[#0078a8]">Leaflet</span> | © <span className="text-[#0078a8]">OpenStreetMap</span> contributors
      </div>
    </div>
  );
}

/* ---------- page ---------- */

export default function App() {
  return (
    <div className={`relative h-[877px] overflow-hidden bg-white text-[#212529] ${UI}`}>
      <div className="flex gap-[30px] pl-[140px]">
        <div className="flex w-[795px] shrink-0 flex-col">
          <div className="-mt-[3px]"><Heading required>Description</Heading></div>
          <div className="mt-[14px] h-[298px] rounded-[3px] border border-[#ccced1]">
            <Toolbar />
            <p className="pl-[12px] pt-[20px] text-[19px] leading-[28px] tracking-[-0.15px] text-[#707070]">Enter Description</p>
          </div>

          <div className="mb-[14px] mt-[25px]"><Heading>Select Item Condition</Heading></div>
          <SelectBox label="Select Item Condition" />

          <div className="mb-[14px] mt-[25px]"><Heading>Select Item Type</Heading></div>
          <SelectBox label="Select Item Type" />

          <div className="mt-[25px]"><Heading>Status</Heading></div>
          <label className="mt-[14px] flex h-[30px] items-center gap-[9px]">
            <span className="h-[20px] w-[20px] rounded-[5px] border border-[#dee2e6] bg-white" />
            <span className="pt-[1px] text-[19px] tracking-[-0.05px]">Publish</span>
          </label>

          <div className="mt-[25px]"><Heading required>Item Photo</Heading></div>
          <p className="mt-[12px] h-[28px] whitespace-nowrap text-[19px] font-medium leading-[29px] tracking-[0.28px] text-[#4d5154]">Recommended Size 400 x 200</p>
          <div className="mt-[8px] flex h-[47px] items-stretch overflow-hidden rounded-[7px] border border-[#dee2e6] text-[19px]">
            <span className="flex w-[132px] items-center whitespace-nowrap border-r border-[#dee2e6] bg-[#f8f9fa] pl-[14px] pt-[2px]">Choose File</span>
            <span className="flex items-center pl-[15px] pt-[2px] tracking-[0.05px]">No file chosen</span>
          </div>
        </div>

        <div className="w-[795px] shrink-0">
          <MapPanel />
          <div className="mt-[21px] flex gap-[5px] text-[19.2px]">
            <button className="h-[47px] w-[90px] rounded-[7px] border border-[#0d6efd] text-[#0d6efd]">Cancel</button>
            <button className="h-[47px] w-[73px] rounded-[7px] bg-[#0d6efd] text-white">Save</button>
          </div>
        </div>
      </div>

      <div className="absolute left-[1641px] top-[745px] h-[50px] w-[50px]">
        <div className="absolute inset-[-14px] rounded-full bg-[#6a3fdc]/30 blur-[14px]" />
        <div className="absolute inset-[3px] rounded-[14px] bg-[#5a2fd6]/80 blur-[9px]" />
        <svg width="50" height="50" viewBox="0 0 50 50" className="relative" fill="none" stroke="#c9003f" strokeWidth="6.4" strokeLinecap="round" strokeLinejoin="round">
          <path d="M9.500 24.500 25 8.500 41 24.500M9.500 43.500 25 27.500 41 43.500" />
        </svg>
      </div>
    </div>
  );
}
